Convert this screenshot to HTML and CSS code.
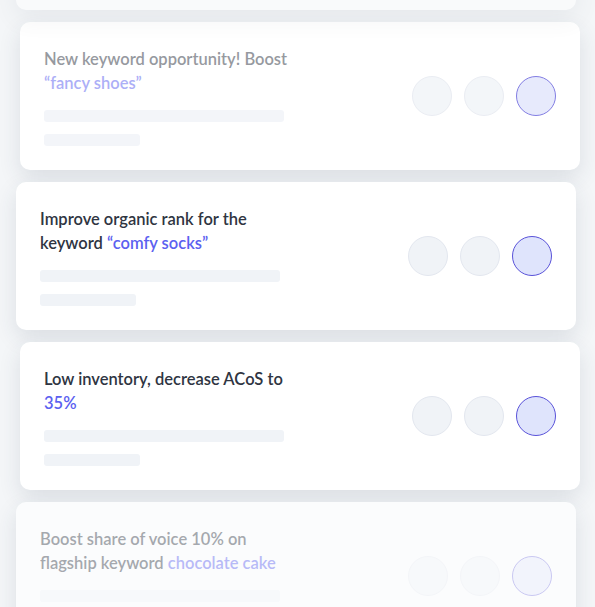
FILE: index.html
```html
<!DOCTYPE html>
<html>
<head>
<meta charset="utf-8">
<link rel="stylesheet" href="styles.css">
</head>
<body>
<div class="stack">
  <div class="card left ghost">
    <div class="text-col">
      <div class="bar long"></div>
      <div class="bar short"></div>
    </div>
    <div class="dots"><span class="dot"></span><span class="dot"></span><span class="dot active"></span></div>
  </div>
  <div class="card right faded">
    <div class="text-col">
      <p class="title">New keyword opportunity! Boost<br><span class="hl">“fancy shoes”</span></p>
      <div class="bar long"></div>
      <div class="bar short"></div>
    </div>
    <div class="dots"><span class="dot"></span><span class="dot"></span><span class="dot active"></span></div>
  </div>
  <div class="card left">
    <div class="text-col">
      <p class="title">Improve organic rank for the<br>keyword <span class="hl">“comfy socks”</span></p>
      <div class="bar long"></div>
      <div class="bar short"></div>
    </div>
    <div class="dots"><span class="dot"></span><span class="dot"></span><span class="dot active"></span></div>
  </div>
  <div class="card right">
    <div class="text-col">
      <p class="title">Low inventory, decrease ACoS to<br><span class="hl">35%</span></p>
      <div class="bar long"></div>
      <div class="bar short"></div>
    </div>
    <div class="dots"><span class="dot"></span><span class="dot"></span><span class="dot active"></span></div>
  </div>
  <div class="card left very-faded">
    <div class="text-col">
      <p class="title">Boost share of voice 10% on<br>flagship keyword <span class="hl">chocolate cake</span></p>
      <div class="bar long"></div>
      <div class="bar short"></div>
    </div>
    <div class="dots"><span class="dot"></span><span class="dot"></span><span class="dot active"></span></div>
  </div>
</div>
</body>
</html>
```
FILE: styles.css
```css
html, body {
  margin: 0;
  padding: 0;
}
body {
  background: #f4f6f8;
  font-family: "Lato", "Noto Sans", sans-serif;
  width: 595px;
  height: 607px;
  overflow: hidden;
}
.stack {
  display: flex;
  flex-direction: column;
  gap: 12px;
  margin-top: -138px;
}
.card {
  width: 560px;
  height: 148px;
  box-sizing: border-box;
  padding: 24px;
  background: #ffffff;
  border-radius: 10px;
  box-shadow: 0 8px 22px rgba(40, 55, 80, 0.12);
  display: flex;
  align-items: center;
  justify-content: space-between;
  flex-shrink: 0;
}
.card.left { margin-left: 16px; }
.card.right { margin-left: 20px; }
.text-col {
  display: flex;
  flex-direction: column;
  align-self: flex-start;
}
.title {
  margin: 0;
  padding-top: 1px;
  font-size: 16.5px;
  line-height: 24px;
  font-weight: 600;
  color: #2f3542;
  white-space: nowrap;
}
.hl { color: #5b61f0; }
.bar {
  height: 12px;
  border-radius: 3px;
  background: #f0f3f7;
}
.bar.long { width: 240px; margin-top: 15px; }
.bar.short { width: 96px; margin-top: 12px; }
.dots {
  display: flex;
  gap: 12px;
}
.dot {
  width: 40px;
  height: 40px;
  box-sizing: border-box;
  border-radius: 50%;
  background: #f0f3f7;
  border: 1px solid #e3e7ef;
}
.dot.active {
  background: #dfe4fc;
  border-color: #5952d9;
}
.ghost { opacity: 0.5; }
.faded .title { opacity: 0.5; }
.faded .bar { opacity: 0.8; }
.faded .dots { opacity: 0.75; }
.very-faded { background: #fbfcfd; }
.very-faded .title { opacity: 0.42; }
.very-faded .bar { opacity: 0.3; }
.very-faded .dots { opacity: 0.3; }
```
